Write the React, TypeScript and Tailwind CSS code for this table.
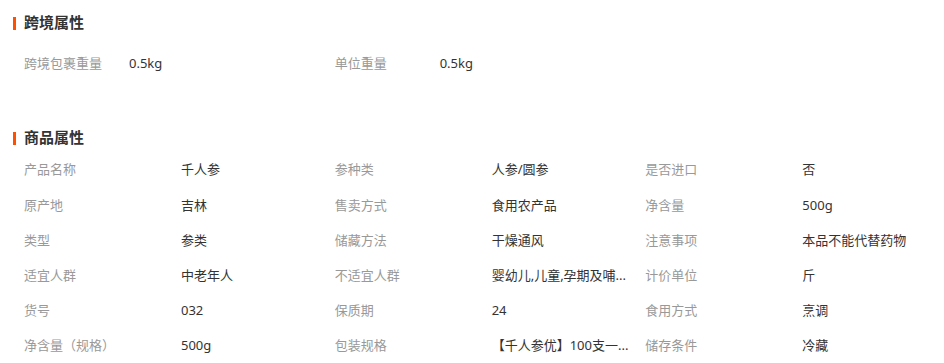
const crossBorder = [
  { label: '跨境包裹重量', value: '0.5kg' },
  { label: '单位重量', value: '0.5kg' },
]

const props = [
  { label: '产品名称', value: '千人参' },
  { label: '参种类', value: '人参/圆参' },
  { label: '是否进口', value: '否' },
  { label: '原产地', value: '吉林' },
  { label: '售卖方式', value: '食用农产品' },
  { label: '净含量', value: '500g' },
  { label: '类型', value: '参类' },
  { label: '储藏方法', value: '干燥通风' },
  { label: '注意事项', value: '本品不能代替药物' },
  { label: '适宜人群', value: '中老年人' },
  { label: '不适宜人群', value: '婴幼儿,儿童,孕期及哺...' },
  { label: '计价单位', value: '斤' },
  { label: '货号', value: '032' },
  { label: '保质期', value: '24' },
  { label: '食用方式', value: '烹调' },
  { label: '净含量（规格）', value: '500g' },
  { label: '包装规格', value: '【千人参优】100支一...' },
  { label: '储存条件', value: '冷藏' },
]

function Title({ text }: { text: string }) {
  return (
    <div className="flex items-center h-[21px]">
      <span className="ml-[13px] w-[3px] h-[13px] bg-[#ff5000] mt-[1px]"></span>
      <h3 className="ml-[8px] text-[15px] leading-[21px] font-bold text-[#333]">{text}</h3>
    </div>
  )
}

export default function App() {
  return (
    <div
      className="w-[944px] h-[363px] overflow-hidden bg-white"
      style={{ fontFamily: '"Noto Sans", "Noto Sans CJK SC", sans-serif' }}
    >
      <div className="pt-[12px]">
        <Title text="跨境属性" />
        <div className="mt-[13px] pl-[24px] grid grid-cols-3 w-[956px]">
          {crossBorder.map((item) => (
            <div key={item.label} className="flex items-center h-[35px] text-[13px]">
              <span className="w-[105px] text-[#999]">{item.label}</span>
              <span className="text-[#333]">{item.value}</span>
            </div>
          ))}
        </div>
      </div>

      <div className="mt-[46px]">
        <Title text="商品属性" />
        <div className="pl-[24px] grid grid-cols-3 w-[956px] mt-[4.5px]">
          {props.map((item) => (
            <div key={item.label} className="flex items-center h-[35.2px] text-[13px]">
              <span className="w-[157px] shrink-0 text-[#999]">{item.label}</span>
              <span className="whitespace-nowrap text-[#333]">{item.value}</span>
            </div>
          ))}
        </div>
      </div>
    </div>
  )
}
